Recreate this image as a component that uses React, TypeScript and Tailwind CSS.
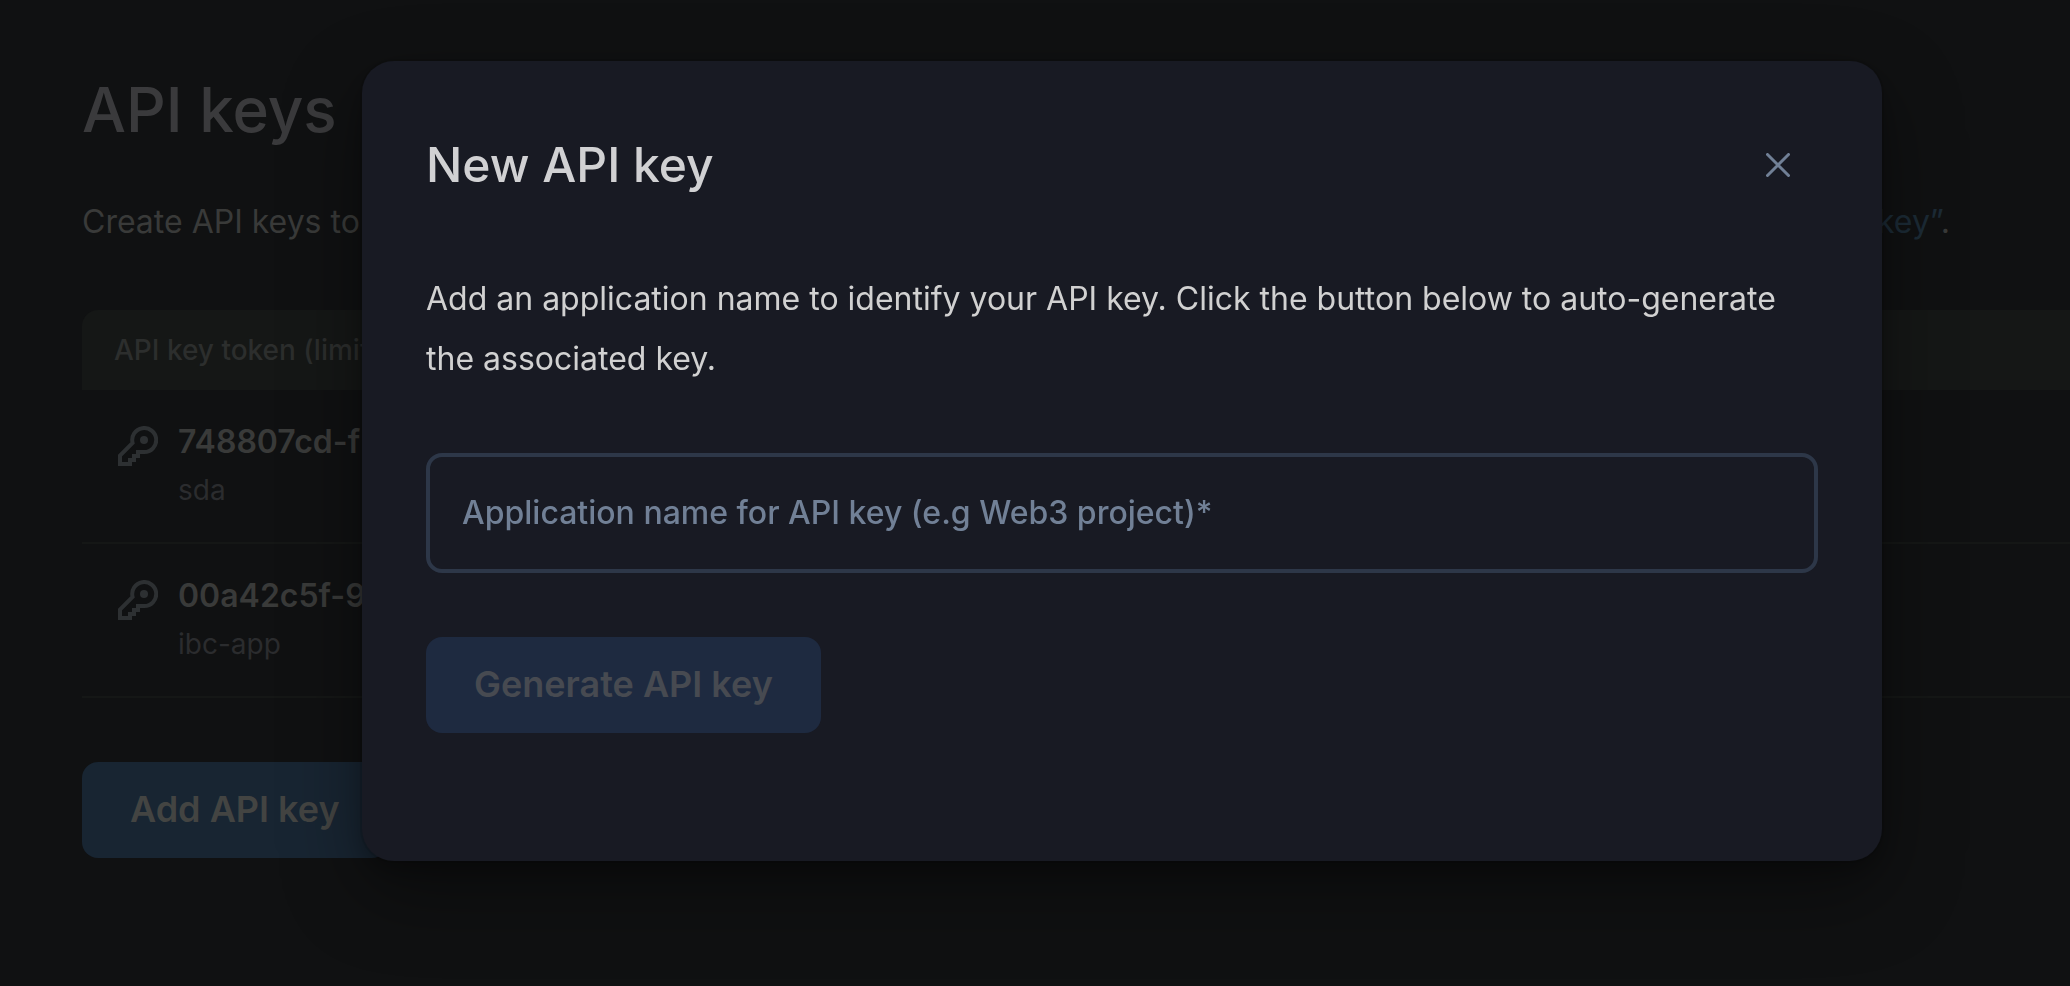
import { useState } from "react";

const keys = [
  { token: "748807cd-f", name: "sda" },
  { token: "00a42c5f-9", name: "ibc-app" },
];

function KeyIcon() {
  return (
    <svg viewBox="0 0 40 40" className="size-10 shrink-0" fill="none" aria-hidden="true">
      <path
        d="M26 26H20V30H16V34H12V38H2V29.5L14.6 17A12 12 0 1 1 26 26Z"
        stroke="#2d3032"
        strokeWidth="4"
      />
      <circle cx="26" cy="14" r="4" fill="#2d3032" />
    </svg>
  );
}

function CloseIcon() {
  return (
    <svg viewBox="0 0 24 24" className="size-6" fill="none" stroke="currentColor" strokeWidth="3" strokeLinecap="round" aria-hidden="true">
      <path d="M1.5 1.5L22.5 22.5M22.5 1.5L1.5 22.5" />
    </svg>
  );
}

function KeysPage() {
  return (
    <main className="min-h-screen overflow-hidden pt-[66px] pl-[82px]">
      <h1 className="text-[62px] leading-[88px] font-medium text-[#3a3a3c]">API keys</h1>
      <p className="mt-[38px] flex max-w-[1868px] justify-between text-[32px] leading-[60px] text-[#393a39]">
        <span>Create API keys to</span>
        <span>
          <a href="#add" className="text-[#1c2b36]">“Add API key”</a>.
        </span>
      </p>
      <table className="mt-[58px] w-full border-separate border-spacing-0 text-left">
        <thead>
          <tr>
            <th className="h-20 rounded-tl-2xl bg-[#151716] px-8 text-[28px] leading-10 font-medium text-[#2c2e2d]">
              API key token (limit 10)
            </th>
          </tr>
        </thead>
        <tbody>
          {keys.map((key) => (
            <tr key={key.token}>
              <td className="border-b-2 border-[#151716] px-9 py-7">
                <div className="flex gap-5">
                  <div className="pt-2">
                    <KeyIcon />
                  </div>
                  <div>
                    <div className="text-[32px] leading-12 font-semibold text-[#393a39]">{key.token}</div>
                    <div className="text-[28px] leading-12 text-[#2b2c2e]">{key.name}</div>
                  </div>
                </div>
              </td>
            </tr>
          ))}
        </tbody>
      </table>
      <button id="add" type="button" className="mt-16 h-24 rounded-2xl bg-[#182532] px-12 pb-0.5 text-[36px] leading-[48px] font-semibold text-[#434442]">
        Add API key
      </button>
    </main>
  );
}

function NewKeyDialog() {
  const [name, setName] = useState("");
  return (
    <div className="fixed inset-0 flex items-start pt-[61px] pr-[188px] pl-[362px]">
      <section
        role="dialog"
        aria-labelledby="dialog-title"
        className="flex-1 rounded-[32px] bg-[#181a23] px-16 pt-16 pb-32 shadow-[0_0_0_2px_rgba(0,0,0,0.1),0_10px_20px_rgba(0,0,0,0.2),0_30px_80px_rgba(0,0,0,0.4)]"
      >
        <header className="flex items-center justify-between pr-4">
          <h2 id="dialog-title" className="text-[48px] leading-[80px] font-medium text-[#d1d1d3]">
            New API key
          </h2>
          <button type="button" aria-label="Close" className="grid size-12 place-items-center text-[#718096]">
            <CloseIcon />
          </button>
        </header>
        <p className="mt-16 text-[32px] leading-[60px] text-[#d1d1d1]">
          Add an application name to identify your API key. Click the button below to auto-generate the associated key.
        </p>
        <form className="mt-16">
          <input
            type="text"
            aria-label="Application name for API key"
            value={name}
            onChange={(e) => setName(e.target.value)}
            placeholder="Application name for API key (e.g Web3 project)*"
            className="block h-[120px] w-full rounded-2xl border-4 border-[#2d3748] bg-transparent px-8 pb-0.5 text-[32px] font-medium text-[#d1d1d1] placeholder:text-[#718096]"
          />
          <button
            type="submit"
            disabled={name === ""}
            className="mt-16 h-24 rounded-2xl bg-[#1e2a40] px-12 pb-0.5 text-[36px] leading-[48px] font-semibold text-[#474a51]"
          >
            Generate API key
          </button>
        </form>
      </section>
    </div>
  );
}

export default function App() {
  return (
    <div className="min-h-screen bg-[#101112] font-[Inter,sans-serif]">
      <KeysPage />
      <NewKeyDialog />
    </div>
  );
}
